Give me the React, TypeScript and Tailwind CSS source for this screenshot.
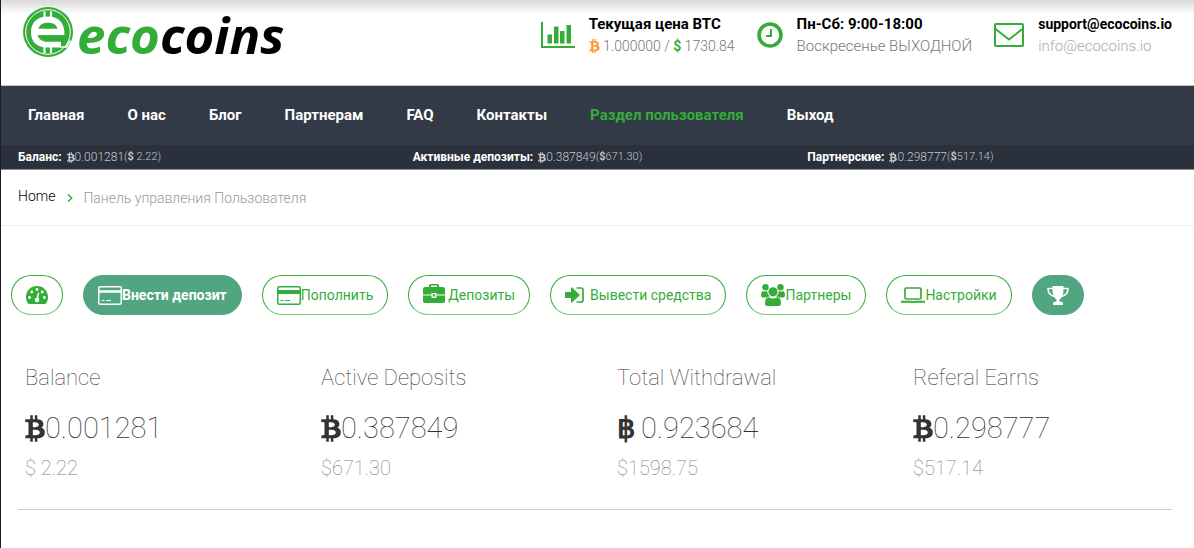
import type { ReactNode } from "react";
import { FaBtc } from "react-icons/fa";

const NAV_LINKS = [
  "Главная",
  "О нас",
  "Блог",
  "Партнерам",
  "FAQ",
  "Контакты",
  "Раздел пользователя",
  "Выход",
];

const BALANCES = [
  { label: "Баланс:", btc: "0.001281", usd: " 2.22" },
  { label: "Активные депозиты:", btc: "0.387849", usd: "671.30" },
  { label: "Партнерские:", btc: "0.298777", usd: "517.14" },
];

const STATS = [
  { title: "Balance", btc: "0.001281", usd: "$ 2.22" },
  { title: "Active Deposits", btc: "0.387849", usd: "$671.30" },
  { title: "Total Withdrawal", btc: "0.923684", usd: "$1598.75", baht: true },
  { title: "Referal Earns", btc: "0.298777", usd: "$517.14" },
];

function Logo() {
  return (
    <a href="#" className="flex items-start" aria-label="ecocoins">
      <svg viewBox="0 0 50 50" className="mt-[7px] size-[50px]">
        <circle cx="25" cy="25" r="25" fill="#34ad38" />
        <circle cx="25" cy="25" r="22.300" fill="none" stroke="#fff" strokeWidth="1" />
        <path d="M21.500 4.500v7M28 4.500v7M21.500 39v7M28 39v7" stroke="#fff" strokeWidth="2.200" />
        <path
          fill="#fff"
          d="M25 9.500c-11 0-17 6-17 15.700 0 9.800 6 15.300 16.500 15.300H38v-6H25c-5.500 0-8.500-2-10-6.300h26.500C42 16 36 9.500 25 9.500z"
        />
        <path fill="#34ad38" d="M15.500 21.700c1.200-4 4-6 9.500-6s8.300 2 9.500 6z" />
        <path fill="#34ad38" d="M14.500 28.200H42l-1.500 6.300H25c-5.500 0-9-2-10.500-6.300z" />
        <path d="M37 40h6.500l4-6.500" stroke="#fff" strokeWidth="1.500" fill="none" />
      </svg>
      <span className="ml-1 font-['Open_Sans',sans-serif] text-[51px] leading-[68px] font-bold text-[#34ad38] italic">
        eco<span className="text-black">coins</span>
      </span>
    </a>
  );
}

function ChartIcon() {
  return (
    <svg viewBox="0 0 34 26" className="h-[26px] w-[34px]" fill="#34ad38">
      <path d="M0 0h2v24h32v2H0zM6.500 12.500H11v9H6.500zM13 4.500h4.500v17H13zM19 9h4.500v12.500H19zM25.500 3H30v18.500h-4.500z" />
    </svg>
  );
}

function ClockIcon() {
  return (
    <svg viewBox="0 0 26 26" className="size-[26px]" fill="none" stroke="#34ad38">
      <circle cx="13" cy="13" r="11" strokeWidth="3.600" />
      <path d="M14 7v7H9" strokeWidth="2" />
    </svg>
  );
}

function MailIcon() {
  return (
    <svg viewBox="0 0 30 24" className="h-6 w-[30px]" fill="none" stroke="#34ad38" strokeWidth="2">
      <rect x="1" y="1" width="28" height="22" rx="1" />
      <path d="M1 5.500l14 11 14-11" />
    </svg>
  );
}

function GaugeIcon() {
  return (
    <svg viewBox="0 0 22 18" className="h-[18px] w-[22px]">
      <path
        fill="currentColor"
        d="M11 0C4.800 0 0 4.900 0 11c0 2.200.6 4.200 1.700 6q.6 1 1.600 1h15.400q1 0 1.600-1c1.100-1.800 1.700-3.800 1.700-6C22 4.900 17.200 0 11 0z"
      />
      <g fill="#fff">
        <circle cx="3.600" cy="11.500" r="1.400" />
        <circle cx="5.800" cy="6" r="1.400" />
        <circle cx="11" cy="3.500" r="1.400" />
        <circle cx="16.200" cy="6" r="1.400" />
        <circle cx="18.400" cy="11.500" r="1.400" />
        <circle cx="11" cy="14" r="2.300" />
        <path d="M10.300 13l1.700-6.500 1.200.3-1.200 7z" />
      </g>
    </svg>
  );
}

function CardIcon({ filled = false }: { filled?: boolean }) {
  return (
    <svg viewBox="0 0 24 19" className="h-[19px] w-6" fill="none" stroke="currentColor" strokeWidth="1.500">
      <rect x=".75" y=".75" width="22.500" height="17.500" rx="1.500" />
      {filled ? (
        <path d="M1 6h22" strokeWidth="4" />
      ) : (
        <path d="M1 5.500h22" strokeWidth="2.500" />
      )}
      <path d="M3.500 14.500h3M8 14.500h5" strokeWidth="1.200" />
    </svg>
  );
}

function BriefcaseIcon() {
  return (
    <svg viewBox="0 0 22 19" className="mb-[3px] h-[19px] w-[22px]" fill="currentColor">
      <path d="M6 3V1.500Q6 0 7.500 0h7Q16 0 16 1.500V3h4q2 0 2 2v5.500h-8.500V9h-5v1.500H0V5q0-2 2-2zm2 0h6V1.500H8zM0 11.500h8.500V13q0 1 1 1h3q1 0 1-1v-1.500H22V17q0 2-1.500 2h-19Q0 19 0 17zM9.800 10.300h2.400v2.300H9.800z" />
    </svg>
  );
}

function SignInIcon() {
  return (
    <svg viewBox="0 0 20 16" className="h-4 w-5" fill="currentColor">
      <path d="M0 5h6V1q0-1 1-.5l7.500 7q.6.500 0 1L7 15.500q-1 .5-1-.5v-4H0z" />
      <path d="M11.500 1H16q2 0 2 2v10q0 2-2 2h-4.500" fill="none" stroke="currentColor" strokeWidth="1.700" />
    </svg>
  );
}

function PeopleIcon() {
  return (
    <svg viewBox="0 0 24 22" className="h-[22px] w-6" fill="currentColor">
      <circle cx="4.500" cy="3.200" r="3.200" />
      <circle cx="19.500" cy="3.200" r="3.200" />
      <circle cx="12" cy="7.800" r="4.600" />
      <path d="M1.500 7q1.500 1 4.500 0 .3 4 3 5.500-2.500.2-3.500 1H2Q0 13.500 0 11.500 0 8 1.500 7zM22.500 7Q21 8 18 7q-.3 4-3 5.500 2.500.2 3.500 1H22q2 0 2-2Q24 8 22.500 7zM7.500 13.300q4.500 2.500 9 0 3.500.5 3.500 6.200 0 2.500-2.500 2.500h-11Q4 22 4 19.500q0-5.700 3.500-6.200z" />
    </svg>
  );
}

function LaptopIcon() {
  return (
    <svg viewBox="0 0 24 16" className="h-4 w-6" fill="none" stroke="currentColor" strokeWidth="1.700">
      <rect x="4" y="1" width="16" height="11" rx="1.200" />
      <path d="M0 14.700h10.500M13.500 14.700H24M10 15.300h4" strokeWidth="2" />
    </svg>
  );
}

function TrophyIcon() {
  return (
    <svg viewBox="0 0 22 19" className="h-[19px] w-[22px]" fill="currentColor">
      <path d="M5.500 0h11v4c0 5-1.500 8-4 9.500v2.200h2q1.500 0 1.500 1.500V19H6v-1.800q0-1.500 1.500-1.500h2v-2.200C7 12 5.500 9 5.500 4z" />
      <path
        d="M6 2.500H1c0 4 2 7 6.500 8M16 2.500h5c0 4-2 7-6.500 8"
        fill="none"
        stroke="currentColor"
        strokeWidth="1.500"
      />
    </svg>
  );
}

function ContactInfo({
  icon,
  title,
  children,
}: {
  icon: ReactNode;
  title: ReactNode;
  children: ReactNode;
}) {
  return (
    <div className="flex items-center gap-[14px]">
      {icon}
      <div className="text-[15px] leading-[22px] text-[#777]">
        <p className="font-bold text-black">{title}</p>
        <p className="font-light">{children}</p>
      </div>
    </div>
  );
}

function PillButton({
  children,
  label,
  solid = false,
}: {
  children: ReactNode;
  label?: string;
  solid?: boolean;
}) {
  return (
    <button
      type="button"
      aria-label={label}
      className={`flex h-10 shrink-0 items-center rounded-full border px-[14px] text-sm whitespace-nowrap ${
        solid
          ? "border-[#52a581] bg-[#52a581] font-bold text-white"
          : "border-[#34ad38] border-b-[#7fcb82] text-[#34ad38]"
      }`}
    >
      {children}
    </button>
  );
}

export default function App() {
  return (
    <div className="min-h-screen border-l border-[#1b1b20] bg-white font-[Roboto,sans-serif] text-[#333]">
      <header className="flex h-[85px] items-start justify-between bg-linear-to-b from-[#dadada] to-white to-[14px] px-[22px]">
        <Logo />
        <div className="flex gap-[22px] pt-[13px]">
          <ContactInfo icon={<ChartIcon />} title="Текущая цена BTC">
            <span className="text-sm leading-[22px]">
              <FaBtc className="mb-[2px] inline h-[14px] w-[11px] text-[#ff9c36]" /> 1.000000 /{" "}
              <b className="font-bold text-[#34ad38]">$</b> 1730.84
            </span>
          </ContactInfo>
          <ContactInfo icon={<ClockIcon />} title="Пн-Сб: 9:00-18:00">
            Воскресенье ВЫХОДНОЙ
          </ContactInfo>
          <ContactInfo
            icon={<MailIcon />}
            title={<span className="text-sm leading-[22px]">support@ecocoins.io</span>}
          >
            <span className="text-[#aaa]">info@ecocoins.io</span>
          </ContactInfo>
        </div>
      </header>

      <nav className="flex h-[60px] items-center gap-[43px] border-t border-[#bcc8c6] bg-[#333a47] pl-[27px] text-[15px] font-bold text-white">
        {NAV_LINKS.map((link) => (
          <a
            key={link}
            href="#"
            className={link === "Раздел пользователя" ? "text-[#34ad38]" : ""}
          >
            {link}
          </a>
        ))}
      </nav>

      <div className="grid h-[25px] grid-cols-3 items-center border-b border-[#8d8a97] bg-[#2a303c] pr-[7px] pl-[2px] text-xs text-[#c4c6ca]">
        {BALANCES.map((item) => (
          <p key={item.label} className="flex items-center px-[15px] whitespace-pre">
            <b className="mr-[5px] font-bold text-white">{item.label}</b>
            <FaBtc className="h-[11px] w-2" />
            <span className="font-light">{item.btc}</span>
            <span className="text-[11px] font-light">
              (<b className="font-bold">$</b>
              {item.usd})
            </span>
          </p>
        ))}
      </div>

      <div className="flex h-14 items-center border-b border-[#ececec] px-[17px] text-sm font-light">
        <a href="#" className="pb-[3px] text-black">
          Home
        </a>
        <svg viewBox="0 0 6 8" className="mr-[10px] ml-3 h-2 w-[6px]" fill="none" stroke="#34ad38" strokeWidth="1.500">
          <path d="M1 .5L4.700 4 1 7.500" />
        </svg>
        <span className="text-[#999]">Панель управления Пользователя</span>
      </div>

      <main>
        <div className="mt-[49px] flex gap-5 pl-[10px]">
          <PillButton label="Dashboard">
            <GaugeIcon />
          </PillButton>
          <PillButton solid>
            <CardIcon />
            Внести депозит
          </PillButton>
          <PillButton>
            <CardIcon filled />
            Пополнить
          </PillButton>
          <PillButton>
            <BriefcaseIcon />
            <span className="ml-[3px]">Депозиты</span>
          </PillButton>
          <PillButton>
            <SignInIcon />
            <span className="ml-[5px]">Вывести средства</span>
          </PillButton>
          <PillButton>
            <PeopleIcon />
            Партнеры
          </PillButton>
          <PillButton>
            <LaptopIcon />
            Настройки
          </PillButton>
          <PillButton solid label="Trophy">
            <TrophyIcon />
          </PillButton>
        </div>

        <section className="grid grid-cols-4 pt-12 pr-[7px] pb-[26px] pl-[2px]">
          {STATS.map((stat) => (
            <div key={stat.title} className="px-[22px]">
              <h3 className="text-[22px] leading-[30px] font-thin">{stat.title}</h3>
              <p className="mt-3 flex items-center text-[29px] leading-[46px] font-thin">
                {stat.baht ? (
                  <b className="mr-[6px] font-bold">฿</b>
                ) : (
                  <FaBtc className="h-[27px] w-5" />
                )}
                {stat.btc}
              </p>
              <p className="mt-[2px] text-xl leading-[30px] font-thin text-[#777]">{stat.usd}</p>
            </div>
          ))}
        </section>
        <hr className="mr-[22px] ml-[17px] border-[#ccc]" />
      </main>
    </div>
  );
}
